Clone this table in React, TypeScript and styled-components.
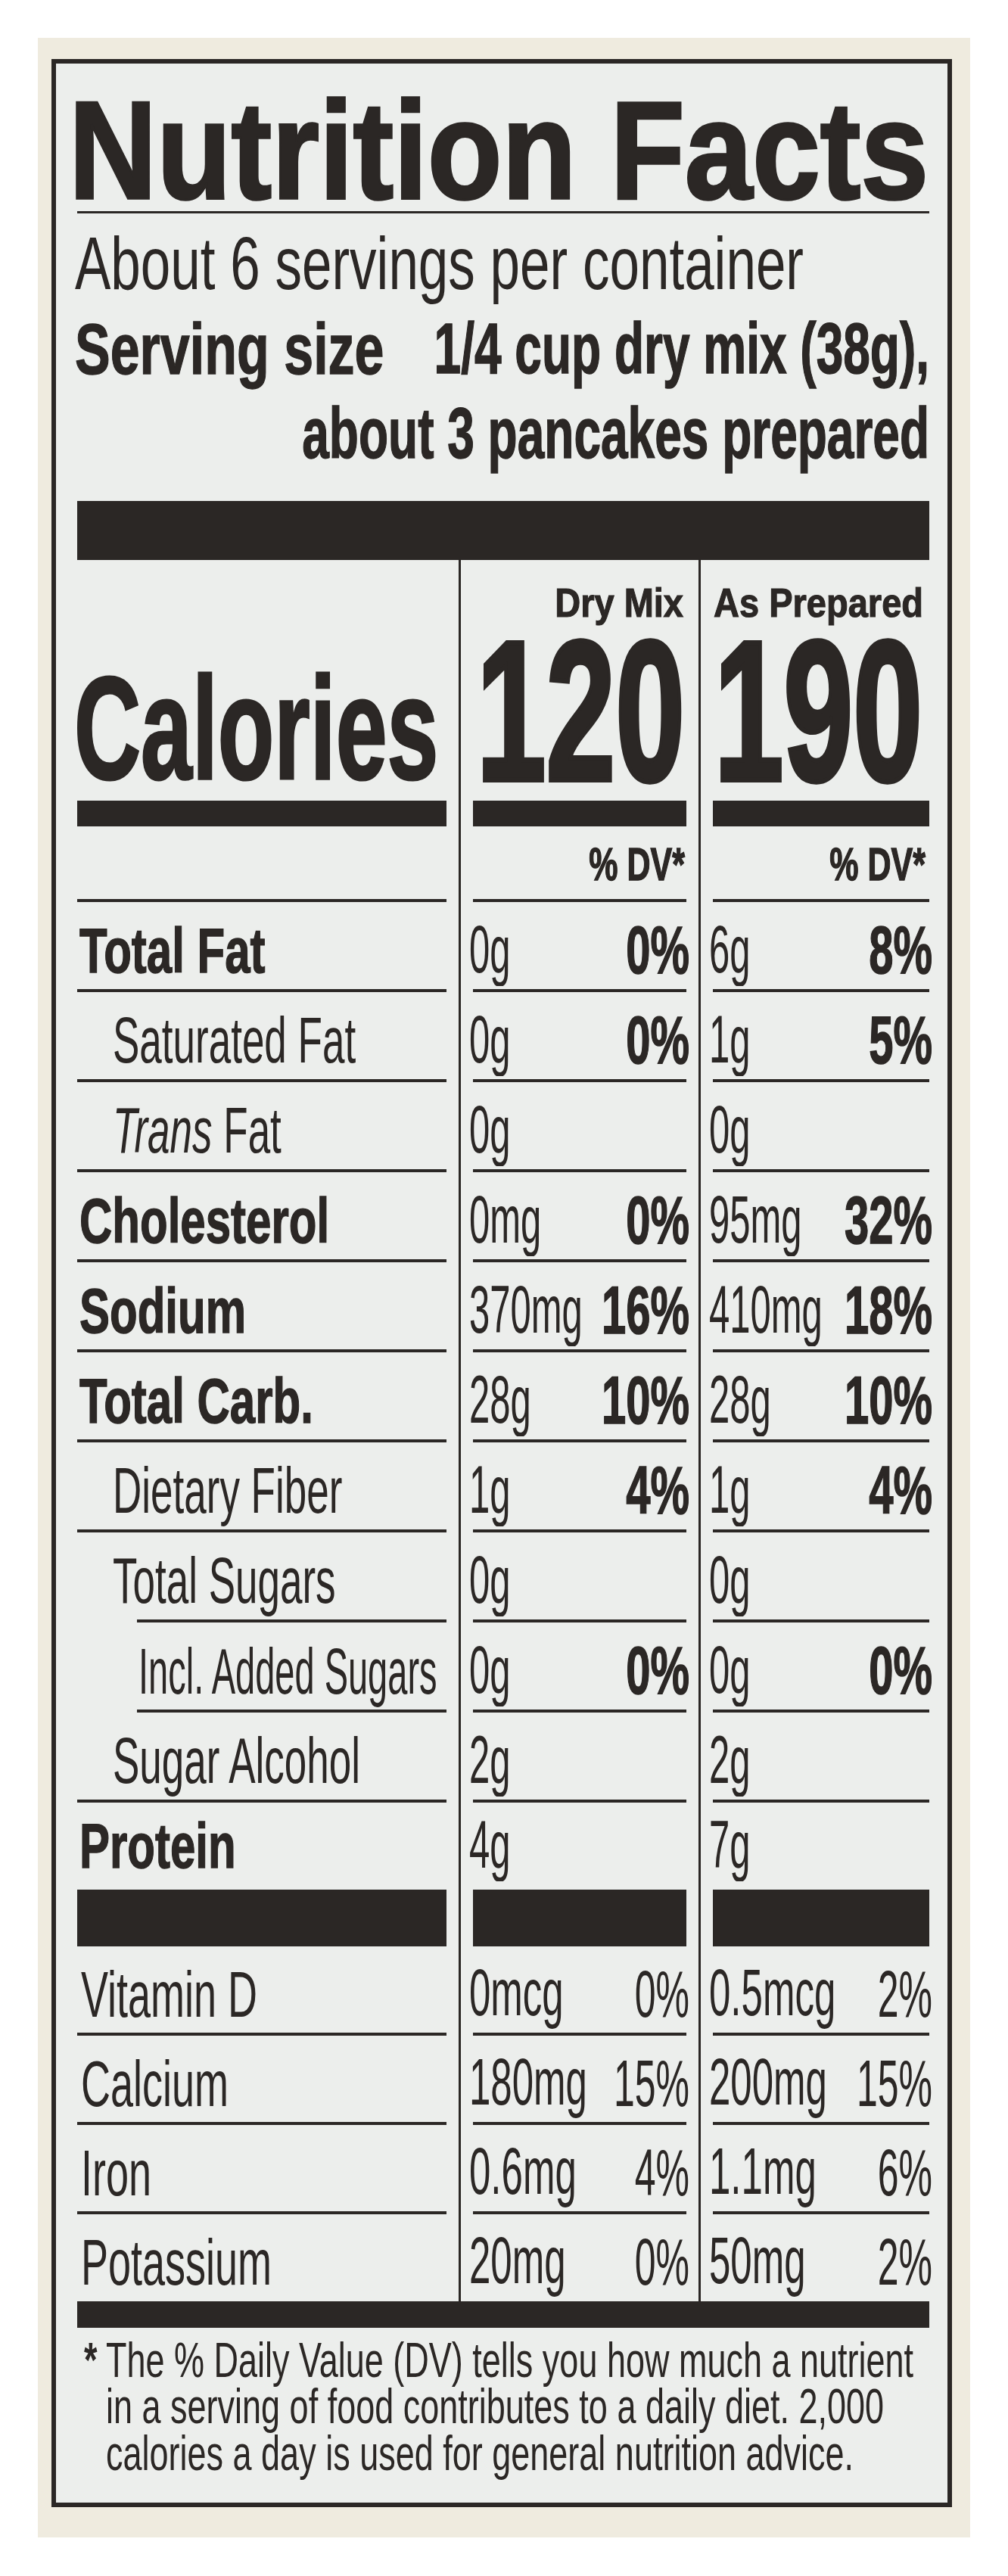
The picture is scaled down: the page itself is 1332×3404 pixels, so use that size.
import React from 'react';
import styled, { createGlobalStyle, css } from 'styled-components';

const INK = '#2b2725';
const PAPER = '#eceeec';
const CREAM = '#efebdf';
// label column, divider gap, dry mix column, divider gap, as prepared column
const COLS = '488px 35px 282px 35px 286px';

const GlobalStyle = createGlobalStyle`
  html, body {
    margin: 0;
    padding: 0;
    background: #ffffff;
  }
  body {
    font-family: 'Liberation Sans', Arial, sans-serif;
    color: ${INK};
  }
`;

// The label face is a tall condensed grotesque: take Liberation Sans at the width we need
// and stretch it upward around its baseline. With line-height .8 the baseline sits
// .0535em above the box bottom, so the negative margin puts it on the parent's content edge.
const squeeze = (size: number, stretch: number, weight = 400, stroke = 0) => css`
  display: inline-block;
  margin: 0 0 -0.0535em;
  font-size: ${size}px;
  line-height: 0.8;
  font-weight: ${weight};
  white-space: nowrap;
  -webkit-text-stroke: ${stroke}px ${INK};
  transform: scaleY(${stretch});
  transform-origin: 50% 93.31%;
`;

// footnote paragraph: 43px lines stretched to a 61.5px pitch
const footType = css`
  font-size: 45px;
  line-height: 43px;
  white-space: nowrap;
  transform: scaleY(1.43);
  transform-origin: top;
`;

interface Nutrient {
  name: string;
  level: 0 | 1 | 2;
  dry: string;
  dryDv?: string;
  prep: string;
  prepDv?: string;
  ruleFrom?: number;
  italicLead?: string;
}

const NUTRIENTS: Nutrient[] = [
  { name: 'Total Fat', level: 0, dry: '0g', dryDv: '0%', prep: '6g', prepDv: '8%' },
  { name: 'Saturated Fat', level: 1, dry: '0g', dryDv: '0%', prep: '1g', prepDv: '5%' },
  { name: ' Fat', italicLead: 'Trans', level: 1, dry: '0g', prep: '0g' },
  { name: 'Cholesterol', level: 0, dry: '0mg', dryDv: '0%', prep: '95mg', prepDv: '32%' },
  { name: 'Sodium', level: 0, dry: '370mg', dryDv: '16%', prep: '410mg', prepDv: '18%' },
  { name: 'Total Carb.', level: 0, dry: '28g', dryDv: '10%', prep: '28g', prepDv: '10%' },
  { name: 'Dietary Fiber', level: 1, dry: '1g', dryDv: '4%', prep: '1g', prepDv: '4%' },
  { name: 'Total Sugars', level: 1, dry: '0g', prep: '0g', ruleFrom: 79 },
  { name: 'Incl. Added Sugars', level: 2, dry: '0g', dryDv: '0%', prep: '0g', prepDv: '0%', ruleFrom: 79 },
  { name: 'Sugar Alcohol', level: 1, dry: '2g', prep: '2g' },
  { name: 'Protein', level: 0, dry: '4g', prep: '7g' },
];

const VITAMINS = [
  { name: 'Vitamin D', dry: '0mcg', dryDv: '0%', prep: '0.5mcg', prepDv: '2%' },
  { name: 'Calcium', dry: '180mg', dryDv: '15%', prep: '200mg', prepDv: '15%' },
  { name: 'Iron', dry: '0.6mg', dryDv: '4%', prep: '1.1mg', prepDv: '6%' },
  { name: 'Potassium', dry: '20mg', dryDv: '0%', prep: '50mg', prepDv: '2%' },
];

const INDENT = [3, 47, 81];

const NutrientRow: React.FC<{ item: Nutrient; last?: boolean }> = ({ item, last }) => {
  const pb = last ? 28 : 25;
  return (
    <Row $h={last ? 115 : 119}>
      <Cell $pb={pb} $pl={INDENT[item.level]} $rule={!last} $ruleFrom={item.ruleFrom}>
        <NutrientName $level={item.level}>
          {item.italicLead && <Em>{item.italicLead}</Em>}
          {item.name}
        </NutrientName>
      </Cell>
      <Divider />
      <Cell $pb={pb} $rule={!last}>
        <Amount>{item.dry}</Amount>
        {item.dryDv && <Percent>{item.dryDv}</Percent>}
      </Cell>
      <Divider />
      <Cell $pb={pb} $rule={!last}>
        <Amount>{item.prep}</Amount>
        {item.prepDv && <Percent>{item.prepDv}</Percent>}
      </Cell>
    </Row>
  );
};

const App: React.FC = () => (
  <>
    <GlobalStyle />
    <Backdrop>
      <Label>
        <TextRow $h={178}>
          <Title>Nutrition Facts</Title>
        </TextRow>
        <HairRule />
        <TextRow $h={101}>
          <Servings>About 6 servings per container</Servings>
        </TextRow>
        <TextRow $h={111}>
          <ServingLabel>Serving size</ServingLabel>
          <ServingValue>1/4 cup dry mix (38g),</ServingValue>
        </TextRow>
        <TextRow $h={112} $end>
          <ServingValue>about 3 pancakes prepared</ServingValue>
        </TextRow>
        <HeavyBar />

        <Table>
          <Row $h={82}>
            <Cell />
            <Divider />
            <Cell $pb={7} $justify='flex-end'>
              <ColHead $mr={4}>Dry Mix</ColHead>
            </Cell>
            <Divider />
            <Cell $pb={7} $justify='flex-end'>
              <ColHead $mr={8}>As Prepared</ColHead>
            </Cell>
          </Row>
          <Row $h={236}>
            <Cell $pb={27}>
              <CalLabel>Calories</CalLabel>
            </Cell>
            <Divider />
            <Cell $pb={27} $justify='flex-end'>
              <CalValue $mr={2}>120</CalValue>
            </Cell>
            <Divider />
            <Cell $pb={27} $justify='flex-end'>
              <CalValue $mr={9}>190</CalValue>
            </Cell>
          </Row>
          <Row $h={34}>
            <Slab />
            <Divider />
            <Slab />
            <Divider />
            <Slab />
          </Row>
          <Row $h={100}>
            <Cell $pb={29} $rule />
            <Divider />
            <Cell $pb={29} $rule $justify='flex-end'>
              <DvHead $mr={2}>% DV*</DvHead>
            </Cell>
            <Divider />
            <Cell $pb={29} $rule $justify='flex-end'>
              <DvHead $mr={5}>% DV*</DvHead>
            </Cell>
          </Row>

          {NUTRIENTS.map((item, i) => (
            <NutrientRow key={i} item={item} last={i === NUTRIENTS.length - 1} />
          ))}

          <Row $h={75}>
            <Slab />
            <Divider />
            <Slab />
            <Divider />
            <Slab />
          </Row>

          {VITAMINS.map((v, i) => {
            const last = i === VITAMINS.length - 1;
            const pb = last ? 22 : 25;
            return (
              <Row key={v.name} $h={last ? 115 : 118}>
                <Cell $pb={pb} $pl={5} $rule={!last}>
                  <VitName>{v.name}</VitName>
                </Cell>
                <Divider />
                <Cell $pb={pb} $rule={!last}>
                  <VitAmount>{v.dry}</VitAmount>
                  <VitPercent>{v.dryDv}</VitPercent>
                </Cell>
                <Divider />
                <Cell $pb={pb} $rule={!last}>
                  <VitAmount>{v.prep}</VitAmount>
                  <VitPercent>{v.prepDv}</VitPercent>
                </Cell>
              </Row>
            );
          })}
        </Table>
        <BottomBar />

        <FootNote>
          <Star>*</Star>
          <FootBody>
            The % Daily Value (DV) tells you how much a nutrient
            <br />
            in a serving of food contributes to a daily diet. 2,000
            <br />
            calories a day is used for general nutrition advice.
          </FootBody>
        </FootNote>
      </Label>
    </Backdrop>
  </>
);

const Backdrop = styled.div`
  box-sizing: border-box;
  width: 1232px;
  margin: 50px 0 0 50px;
  padding: 28px 24px 40px 18px;
  background: ${CREAM};
`;

const Label = styled.section`
  display: flex;
  flex-direction: column;
  border: 6px solid ${INK};
  background: ${PAPER};
  padding: 0 24px 90px 28px;
`;

const TextRow = styled.div<{ $h: number; $end?: boolean }>`
  display: flex;
  align-items: flex-end;
  justify-content: ${(p) => (p.$end ? 'flex-end' : 'space-between')};
  height: ${(p) => p.$h}px;
`;

const Title = styled.h1`
  ${squeeze(161, 1.145, 700, 3)}
  margin-left: -11px;
`;

const HairRule = styled.div`
  height: 3px;
  margin-top: 17px;
  background: ${INK};
`;

const Servings = styled.div`
  ${squeeze(71, 1.38)}
  margin-left: -3px;
`;

const ServingLabel = styled.div`
  ${squeeze(70, 1.36, 700, 1)}
  margin-left: -3px;
`;

const ServingValue = styled.div`
  ${squeeze(64, 1.48, 700, 1)}
`;

const HeavyBar = styled.div`
  height: 78px;
  margin-top: 56px;
  background: ${INK};
`;

const Table = styled.div`
  display: flex;
  flex-direction: column;
`;

const Row = styled.div<{ $h: number }>`
  display: grid;
  grid-template-columns: ${COLS};
  height: ${(p) => p.$h}px;
`;

const Divider = styled.div`
  background: linear-gradient(
    to right,
    transparent 16px,
    ${INK} 16px,
    ${INK} 19px,
    transparent 19px
  );
`;

const Cell = styled.div<{
  $pb?: number;
  $pl?: number;
  $rule?: boolean;
  $ruleFrom?: number;
  $justify?: string;
}>`
  display: flex;
  align-items: flex-end;
  justify-content: ${(p) => p.$justify ?? 'space-between'};
  padding: 0 0 ${(p) => p.$pb ?? 0}px ${(p) => p.$pl ?? 0}px;
  ${(p) =>
    p.$rule &&
    css`
      background: linear-gradient(${INK}, ${INK}) right bottom / calc(100% - ${p.$ruleFrom ?? 0}px) 4px
        no-repeat;
    `}
`;

const Slab = styled.div`
  background: ${INK};
`;

const ColHead = styled.div<{ $mr: number }>`
  ${squeeze(47, 1.16, 700, 1)}
  margin-right: ${(p) => p.$mr}px;
`;

const CalLabel = styled.div`
  ${squeeze(122, 1.58, 700, 2)}
  margin-left: -4px;
`;

const CalValue = styled.div<{ $mr: number }>`
  ${squeeze(165, 1.6, 700, 4)}
  margin-right: ${(p) => p.$mr}px;
`;

const DvHead = styled.div<{ $mr: number }>`
  ${squeeze(43, 1.43, 700, 1)}
  margin-right: ${(p) => p.$mr}px;
`;

const NutrientName = styled.div<{ $level: number }>`
  ${(p) =>
    p.$level === 0
      ? squeeze(60, 1.4, 700, 1)
      : p.$level === 1
        ? squeeze(53, 1.61)
        : squeeze(47, 1.81)}
`;

const Em = styled.em`
  font-style: italic;
`;

const Amount = styled.div`
  ${squeeze(49, 1.8)}
  margin-left: -5px;
`;

const Percent = styled.div`
  ${squeeze(58, 1.55, 700, 1)}
  margin-right: -4px;
`;

const VitName = styled.div`
  ${squeeze(54, 1.58)}
`;

const VitAmount = styled.div`
  ${squeeze(51, 1.72)}
  margin-left: -5px;
`;

const VitPercent = styled.div`
  ${squeeze(50, 1.75)}
  margin-right: -4px;
`;

const BottomBar = styled.div`
  height: 35px;
  background: ${INK};
`;

const FootNote = styled.div`
  display: flex;
  align-items: flex-start;
  height: 129px;
  margin-top: 12px;
`;

const Star = styled.span`
  ${footType}
  width: 29px;
  margin-left: 9px;
  font-weight: 700;
`;

const FootBody = styled.p`
  ${footType}
  margin: 0;
`;

export default App;
